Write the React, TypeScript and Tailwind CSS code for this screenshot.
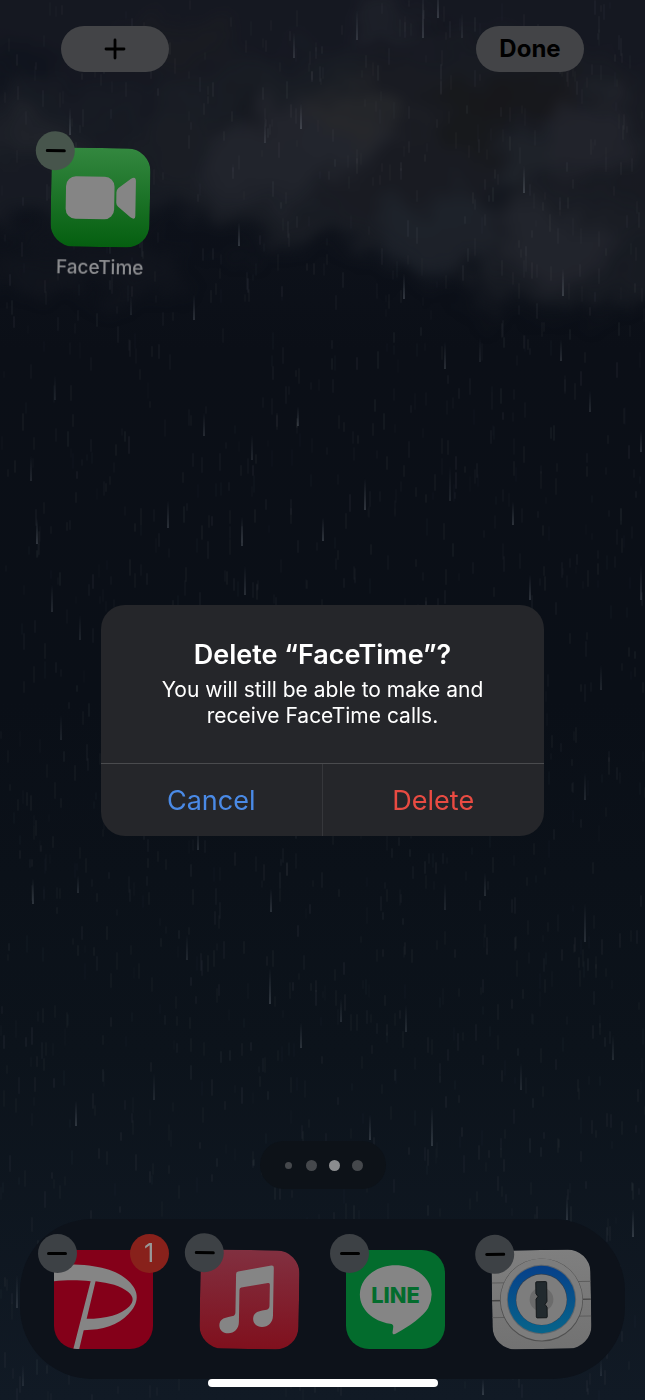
import type { ReactNode } from 'react'

interface AppIconProps {
  name: string
  tilt?: string
  minusColor?: string
  badge?: number
  children: ReactNode
}

// [x, bottom, length, opacity]
const DROPS: [number, number, number, number][] = [
  [356, 40, 30, 0.2], [293, 58, 26, 0.2], [422, 38, 50, 0.22], [437, 18, 30, 0.25], [461, 38, 26, 0.12],
  [69, 135, 28, 0.22], [264, 143, 26, 0.16], [300, 129, 26, 0.26], [523, 193, 28, 0.26], [238, 246, 24, 0.26],
  [403, 299, 26, 0.26], [562, 296, 28, 0.26], [193, 320, 26, 0.22], [130, 315, 20, 0.12], [54, 400, 26, 0.12],
  [444, 369, 28, 0.2], [479, 362, 26, 0.12], [560, 361, 22, 0.2], [589, 412, 22, 0.18], [203, 436, 24, 0.18],
  [297, 426, 20, 0.24], [251, 460, 26, 0.16], [640, 452, 22, 0.2], [30, 481, 26, 0.16], [364, 510, 32, 0.26],
  [449, 501, 36, 0.14], [167, 528, 28, 0.22], [241, 546, 30, 0.24], [322, 541, 24, 0.26], [36, 544, 26, 0.26],
  [512, 525, 24, 0.24], [244, 595, 30, 0.2], [529, 600, 26, 0.24], [640, 600, 36, 0.2], [51, 612, 28, 0.18],
  [79, 640, 26, 0.14], [600, 690, 26, 0.16], [60, 740, 26, 0.14], [584, 800, 28, 0.16], [197, 850, 22, 0.2],
  [32, 904, 26, 0.24], [77, 893, 18, 0.18], [270, 912, 24, 0.22], [444, 910, 28, 0.14], [584, 942, 40, 0.2],
  [484, 896, 24, 0.18], [186, 960, 26, 0.15], [269, 1004, 36, 0.26], [300, 1048, 26, 0.22], [340, 1022, 24, 0.18],
  [405, 1032, 28, 0.18], [75, 1126, 26, 0.24], [153, 1100, 28, 0.14], [369, 1140, 26, 0.24], [431, 1146, 40, 0.24],
  [520, 1090, 28, 0.16], [612, 1060, 26, 0.16], [566, 1220, 26, 0.2], [632, 1237, 28, 0.26], [16, 1308, 34, 0.2],
  [22, 1386, 22, 0.14], [482, 1395, 16, 0.24], [600, 1376, 18, 0.14],
]

// fixed seed so that the rain falls the same way on every render
const makeDrizzle = (count: number) => {
  let seed = 7
  const next = () => {
    seed = (seed * 16807) % 2147483647
    return seed / 2147483647
  }
  return Array.from({ length: count }, () => ({
    x: Math.round(next() * 645),
    y: Math.round(next() * 1400),
    length: 7 + Math.round(next() * 11),
    opacity: 0.02 + next() * 0.05,
  }))
}

const DRIZZLE = makeDrizzle(1700)

// [cx, cy, rx, ry, color]
const CLOUDS: [number, number, number, number, string][] = [
  [320, 20, 420, 100, '#161922'],
  [60, 160, 150, 75, '#191c25'],
  [330, 150, 190, 95, '#1b1e26'],
  [500, 150, 190, 110, '#1a1c23'],
  [560, 250, 115, 62, '#1a1d25'],
  [90, 270, 100, 24, '#12151d'],
  [300, 145, 80, 45, '#24272f'],
  [355, 115, 55, 25, '#27282c'],
  [430, 235, 65, 42, '#1f232b'],
  [265, 175, 55, 35, '#21252d'],
  [40, 140, 45, 22, '#21252c'],
  [170, 45, 70, 26, '#1b1c22'],
  [400, 25, 45, 18, '#20222a'],
  [590, 135, 50, 34, '#23262e'],
  [530, 165, 35, 24, '#20242c'],
  [560, 245, 56, 38, '#23262e'],
  [470, 115, 40, 34, '#18191b'],
  [530, 95, 50, 26, '#17181b'],
  [20, 65, 40, 22, '#10141d'],
  [240, 105, 26, 14, '#14171f'],
  [425, 24, 24, 10, '#10131b'],
  [500, 195, 24, 14, '#12151d'],
]

function Wallpaper() {
  return (
    <svg
      className="absolute inset-0 h-full w-full"
      viewBox="0 0 645 1400"
      preserveAspectRatio="xMidYMid slice"
      aria-hidden="true"
    >
      <defs>
        <linearGradient id="sky" x1="0" y1="0" x2="0" y2="1">
          <stop offset="0" stopColor="#121620" />
          <stop offset="0.25" stopColor="#0b0f17" />
          <stop offset="0.5" stopColor="#0a0f17" />
          <stop offset="0.75" stopColor="#0c131b" />
          <stop offset="1" stopColor="#111a25" />
        </linearGradient>
        <linearGradient id="drop" x1="0" y1="0" x2="0" y2="1">
          <stop offset="0" stopColor="#9aa3ad" stopOpacity="0" />
          <stop offset="1" stopColor="#9aa3ad" />
        </linearGradient>
        <filter id="puff" x="-10%" y="-10%" width="120%" height="120%" colorInterpolationFilters="sRGB">
          <feGaussianBlur stdDeviation="9" result="soft" />
          <feTurbulence type="fractalNoise" baseFrequency="0.02" numOctaves="4" seed="4" result="noise" />
          <feDisplacementMap in="soft" in2="noise" scale="70" xChannelSelector="R" yChannelSelector="G" />
          <feGaussianBlur stdDeviation="5" />
        </filter>
      </defs>
      <rect width="645" height="1400" fill="url(#sky)" />
      <g filter="url(#puff)">
        {CLOUDS.map(([cx, cy, rx, ry, color], i) => (
          <ellipse key={i} cx={cx} cy={cy} rx={rx} ry={ry} fill={color} opacity="0.85" />
        ))}
      </g>
      {DRIZZLE.map((drop, i) => (
        <rect key={i} x={drop.x} y={drop.y} width="2" height={drop.length} rx="1" fill="#8d9096" opacity={drop.opacity} />
      ))}
      {DROPS.map(([x, bottom, length, opacity], i) => (
        <rect key={i} x={x} y={bottom - length} width="2" height={length} fill="url(#drop)" opacity={opacity} />
      ))}
    </svg>
  )
}

function AppIcon({ name, tilt = '', minusColor = 'bg-[#3d4145]', badge, children }: AppIconProps) {
  return (
    <div className={`relative size-[99px] ${tilt}`}>
      <button aria-label={name} className="block size-full overflow-hidden rounded-[23px]">
        {children}
      </button>
      <button
        aria-label={`Remove ${name}`}
        className={`absolute -top-4 -left-4 flex size-[39px] items-center justify-center rounded-full ${minusColor}`}
      >
        <span className="h-[3px] w-5 rounded-full bg-black" />
      </button>
      {badge !== undefined && (
        <span className="absolute -top-4 -right-4 flex size-[39px] items-center justify-center rounded-full bg-[#88211b] text-[25px] text-[#989898]">
          {badge}
        </span>
      )}
    </div>
  )
}

function FaceTimeArt() {
  return (
    <svg viewBox="0 0 100 100" className="size-full">
      <defs>
        <linearGradient id="facetime" x1="0" y1="0" x2="0" y2="1">
          <stop offset="0" stopColor="#33873f" />
          <stop offset="1" stopColor="#055f10" />
        </linearGradient>
      </defs>
      <rect width="100" height="100" fill="url(#facetime)" />
      <rect x="15" y="29" width="49" height="43" rx="10" fill="#858585" />
      <path d="M66 44.500Q66 42 68 40.200L80.500 30.500Q85.500 27.500 85.500 33V68Q85.500 73 80.500 69.500L68 59Q66 57.300 66 55Z" fill="#858585" />
    </svg>
  )
}

function PayPayArt() {
  return (
    <svg viewBox="0 0 100 100" className="size-full">
      <rect width="100" height="100" fill="#840019" />
      <path
        fillRule="evenodd"
        fill="#858585"
        d="M0 15C40 13 62 19 75 31C87 42 86 54 75 65C65 76 49 81 30 81L25.500 100H19.500L37 31.500C23 30 10 30.500 0 31.500ZM42 31.500L33 69.500C53 69.500 68 65 76 57C81 52 80.500 47 75 42.500C68 36 55 33 42 31.500Z"
      />
    </svg>
  )
}

function MusicArt() {
  return (
    <svg viewBox="0 0 100 100" className="size-full">
      <defs>
        <linearGradient id="music" x1="0" y1="0" x2="0" y2="1">
          <stop offset="0" stopColor="#813040" />
          <stop offset="1" stopColor="#80101d" />
        </linearGradient>
      </defs>
      <rect width="100" height="100" fill="url(#music)" />
      <path
        fill="#858585"
        d="M36 24.500Q36 22.500 38 22L71.500 15.300Q74 15 74 17.500V66C74 73 69 77.500 63 77.500C57.500 77.500 54 74 54 69.500C54 64 58 62 63 61L67.500 60Q70.300 59.300 70.300 56V34.500Q70.300 32.500 68.300 33L41.500 38Q39.700 38.500 39.700 40.500V73C39.700 80 35 84.500 29 84.500C23.500 84.500 20 81 20 76.500C20 71 24 69 29 68L33.300 67Q36 66.300 36 63Z"
      />
    </svg>
  )
}

function LineArt() {
  return (
    <svg viewBox="0 0 100 100" className="size-full">
      <rect width="100" height="100" fill="#036c2d" />
      <path
        fill="#858585"
        d="M50 15.500C30 15.500 14 28.500 14 45C14 60 27 72 44.500 74.500C48 75 48 76.500 47.500 79.500L47 83C47 85.500 48.500 85.500 51 84C64 77 78 67 83 58.500Q86.500 52 86.500 45C86.500 28.500 70 15.500 50 15.500Z"
      />
      <text x="50" y="54" textAnchor="middle" fontSize="22" fontWeight="800" fill="#036c2d">
        LINE
      </text>
    </svg>
  )
}

function OnePasswordArt() {
  return (
    <svg viewBox="0 0 100 100" className="size-full">
      <defs>
        <linearGradient id="ring" x1="0" y1="0" x2="0" y2="1">
          <stop offset="0" stopColor="#06408a" />
          <stop offset="1" stopColor="#07648a" />
        </linearGradient>
        <linearGradient id="plate" x1="0" y1="0" x2="0" y2="1">
          <stop offset="0" stopColor="#7f7f7f" />
          <stop offset="1" stopColor="#727272" />
        </linearGradient>
      </defs>
      <rect width="100" height="100" fill="url(#plate)" />
      <g stroke="#5c5c5c" strokeWidth="1">
        <path d="M0 32.500H100M0 67.500H100" />
        <path d="M0 50.500H100" stroke="#444444" strokeWidth="1.500" />
      </g>
      <circle cx="50" cy="50.500" r="42" fill="#505050" />
      <circle cx="50" cy="50" r="41.300" fill="#7d7d7d" />
      <circle cx="50" cy="50" r="35" fill="#5d646b" />
      <circle cx="50" cy="50" r="34" fill="url(#ring)" />
      <circle cx="50" cy="50" r="26" fill="#303f52" />
      <circle cx="50" cy="50.300" r="25.500" fill="#7d7d7d" />
      <circle cx="50" cy="50" r="12" fill="#6b6b6b" />
      <path
        d="M45.500 32H54.500Q55.500 32 55.500 33V52L53.500 55L55.500 58V67.500Q55.500 68.500 54.500 68.500H45.500Q44.500 68.500 44.500 67.500V49.500L46.500 47L44.500 44V33Q44.500 32 45.500 32Z"
        fill="#222a2e"
        stroke="#14181a"
        strokeWidth="1"
      />
    </svg>
  )
}

function DeleteDialog() {
  return (
    <div className="absolute inset-0 flex items-center justify-center pt-10">
      <div
        role="alertdialog"
        aria-labelledby="dialog-title"
        aria-describedby="dialog-text"
        className="w-[443px] overflow-hidden rounded-[24px] bg-[#25262a] text-center"
      >
        <div className="px-12 pt-8 pb-[34px] text-white">
          <h1 id="dialog-title" className="text-[27px] leading-9 font-semibold">
            Delete “FaceTime”?
          </h1>
          <p id="dialog-text" className="pt-1 text-[21px] leading-[26px]">
            You will still be able to make and receive FaceTime calls.
          </p>
        </div>
        <div className="grid grid-cols-2 border-t border-[#4a4b4e] text-[27px]">
          <button className="h-[72px] border-r border-[#36373b] pt-1 text-[#4a8ae6]">Cancel</button>
          <button className="h-[72px] pt-1 text-[#e94b42]">Delete</button>
        </div>
      </div>
    </div>
  )
}

export default function App() {
  return (
    <div className="relative flex min-h-screen flex-col overflow-hidden bg-[#0a0f17] font-['Inter',sans-serif]">
      <Wallpaper />

      <header className="relative flex justify-between px-[61px] pt-[26px]">
        <button aria-label="Add widget" className="flex h-[46px] w-[108px] items-center justify-center rounded-full bg-[#434447]">
          <svg viewBox="0 0 22 22" className="size-[22px]" stroke="#000" strokeWidth="2.800" strokeLinecap="round">
            <path d="M11 2V20M2 11H20" />
          </svg>
        </button>
        <button className="h-[46px] w-[108px] rounded-full bg-[#434447] text-2xl font-bold text-black">Done</button>
      </header>

      <main className="relative grid grid-cols-4 px-[26px] pt-[76px]">
        <div className="flex flex-col items-center gap-2">
          <AppIcon name="FaceTime" tilt="rotate-1" minusColor="bg-[#47554c]">
            <FaceTimeArt />
          </AppIcon>
          <span className="rotate-1 text-[19px] leading-[26px] font-medium text-[#8c8d90]">FaceTime</span>
        </div>
      </main>

      <nav aria-label="Pages" className="relative mx-auto mt-auto flex h-12 w-[126px] items-center justify-center gap-3 rounded-full bg-[#0d1218]">
        <span className="flex size-[11px] items-center justify-center">
          <span className="size-[7px] rounded-full bg-[#45484c]" />
        </span>
        <span className="size-[11px] rounded-full bg-[#45484c]" />
        <span className="size-[11px] rounded-full bg-[#8b8c8e]" />
        <span className="size-[11px] rounded-full bg-[#45484c]" />
      </nav>

      <footer className="relative mt-[30px] px-5 pb-[13px]">
        <div className="grid h-40 grid-cols-4 justify-items-center rounded-[72px] bg-[#0d121a] px-[10px] pt-[31px]">
          <AppIcon name="PayPay" badge={1}>
            <PayPayArt />
          </AppIcon>
          <AppIcon name="Music" tilt="rotate-1">
            <MusicArt />
          </AppIcon>
          <AppIcon name="LINE">
            <LineArt />
          </AppIcon>
          <AppIcon name="1Password" tilt="-rotate-1">
            <OnePasswordArt />
          </AppIcon>
        </div>
        <div className="mx-auto h-2 w-[230px] rounded-full bg-white" />
      </footer>

      <DeleteDialog />
    </div>
  )
}
